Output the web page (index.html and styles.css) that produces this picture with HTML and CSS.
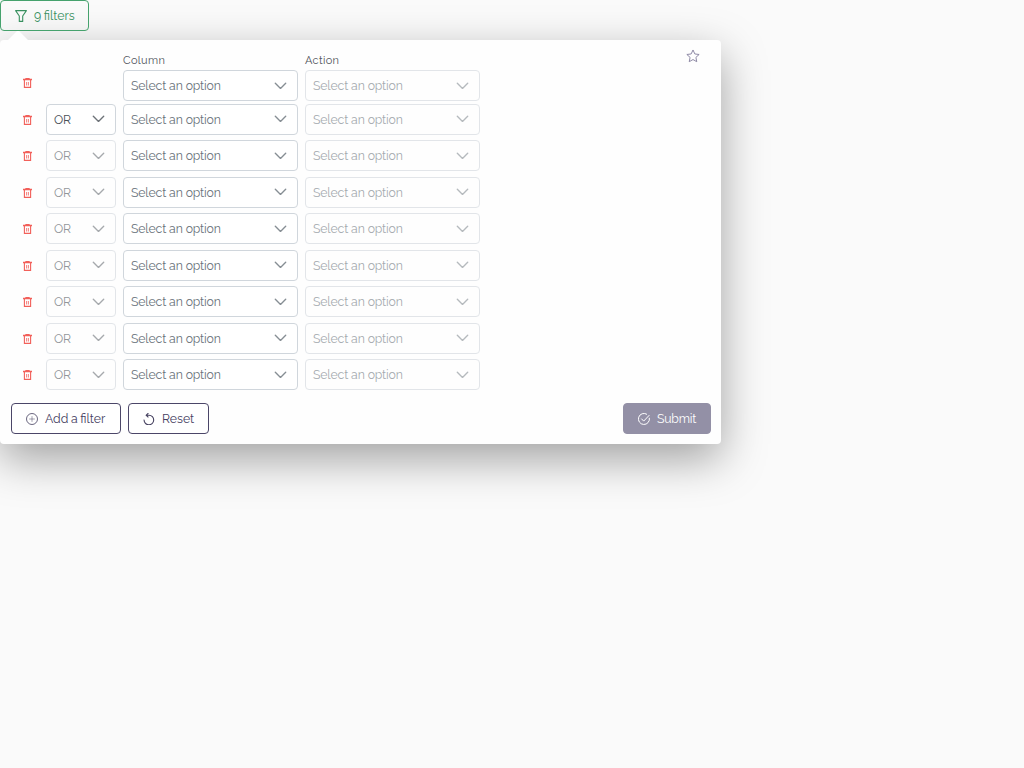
FILE: index.html
```html
<!DOCTYPE html>
<html lang="en">
<head>
<meta charset="utf-8">
<title>Filters</title>
<link rel="stylesheet" href="styles.css">
</head>
<body>
<svg class="symbols" aria-hidden="true">
  <symbol id="trash" viewBox="0 0 9 10"><path d="M0 1.5h9M3 1.1V.5h3v.6" fill="none" stroke="currentColor" stroke-width="1.3"/><path d="M1.4 2v7.4h6.2V2" fill="none" stroke="currentColor" stroke-width="1.1"/><path d="M3.6 4v3.5M5.4 4v3.5" fill="none" stroke="currentColor" stroke-width=".8"/></symbol>
  <symbol id="chevron" viewBox="0 0 12 8"><path d="M.8 1.2 6 6.4l5.2-5.2" fill="none" stroke="currentColor" stroke-width="1.35" stroke-linecap="round" stroke-linejoin="round"/></symbol>
</svg>
<button class="button toggle">
  <svg class="icon" viewBox="0 0 12 12"><path d="M.6.6h10.8L7.7 6v5.4H4.3V6z" fill="none" stroke="currentColor" stroke-width="1.1" stroke-linejoin="round"/></svg>
  <span class="toggle-text">9 filters</span>
</button>
<section class="panel">
  <button class="favourite" aria-label="Favourite"><svg viewBox="0 0 13 13"><path d="m6.5.9 1.7 3.7 4 .5-3 2.7.8 4-3.5-2-3.5 2 .8-4-3-2.7 4-.5z" fill="none" stroke="currentColor" stroke-width=".9" stroke-linejoin="round"/></svg></button>
  <div class="rows" id="rows"></div>
  <footer class="footer">
    <button class="button add">
      <svg class="icon" viewBox="0 0 12 12" fill="none" stroke="currentColor"><circle cx="6" cy="6" r="5.5" stroke-width=".8"/><path d="M6 3.2v5.6M3.2 6h5.6" stroke-width=".5"/></svg>
      <span class="add-text">Add a filter</span>
    </button>
    <button class="button reset">
      <svg class="icon" viewBox="0 0 12 12" fill="none" stroke="currentColor" stroke-width="1.1"><path d="M1.1 6.6a4.8 4.8 0 1 0 4.9-4.4H3.2M5.4.1 3.2 2.2l2.2 2.2"/></svg>
      <span class="reset-text">Reset</span>
    </button>
    <button class="button submit">
      <svg class="icon" viewBox="0 0 12 12" fill="none" stroke="currentColor"><path d="M11.3 4.8A5.5 5.5 0 1 1 9 1.4M3.3 5.6l2.4 2.5 5.7-6" stroke-width="1"/></svg>
      <span class="submit-text">Submit</span>
    </button>
  </footer>
</section>
<script src="script.js"></script>
</body>
</html>
```
FILE: styles.css
```css
* { box-sizing: border-box; }
body { margin: 0; min-height: 100vh; background: #fafafa; font: 400 12.25px/16px Raleway, Lato, sans-serif; color: #6c757d; }
button { font: inherit; }
.symbols { display: none; }
.button { display: flex; align-items: center; height: 31px; padding: 0 14px; border: 1px solid #4b4668; border-radius: 4px; background: #fff; color: #45405f; white-space: nowrap; word-spacing: -.5px; }
.icon { width: 12px; height: 12px; margin-right: 7px; flex: none; }
.toggle { width: 89px; border-color: #46a26d; color: #38905f; background: transparent; position: relative; z-index: 2; }
.panel { position: relative; width: 721px; height: 404px; margin-top: 9px; padding: 13px 10px 10px 11px; background: #fefefe; border-radius: 4px; box-shadow: 0 15px 45px rgba(0,0,0,.36); display: flex; flex-direction: column; }
.panel::before { content: ""; position: absolute; left: 8px; top: -10px; border: 10px solid transparent; border-top: 0; border-bottom-color: #fefefe; }
.favourite { position: absolute; top: 9px; right: 21px; width: 14px; height: 14px; padding: 0; border: 0; background: none; color: #8b86a3; }
.favourite svg { display: block; width: 14px; height: 14px; }
.rows { display: flex; flex-direction: column; }
.row { display: grid; grid-template-columns: 28px 70px 175px 175px; column-gap: 7px; align-items: center; height: 36.5px; }
.row.first { height: 48.2px; align-items: end; }
.remove { display: flex; justify-content: center; width: 28px; height: 31px; padding: 1px 0 0 4px; align-items: center; border: 0; background: none; color: #f2605a; }
.first .remove { position: relative; top: -3px; }
.remove svg { width: 9px; height: 10px; }
.label { display: block; height: 17px; line-height: 15px; font-size: 11px; letter-spacing: .33px; color: #50545c; }
.select { display: flex; align-items: center; justify-content: space-between; height: 31px; padding: 0 10px 0 7px; border: 1px solid #d0d6dc; border-radius: 4px; background: #fff; color: #69727a; }
.select svg { width: 13px; height: 8px; flex: none; opacity: .8; }
.option { padding-top: .3px; letter-spacing: -.14px; }
.select.joiner { color: #495057; }
.select.disabled { opacity: .6; }
.footer { display: flex; gap: 7px; margin-top: auto; }
.add { width: 110px; }
.reset { width: 81px; }
.submit { width: 88px; margin-left: auto; border-color: #9390a6; background: #9390a6; color: #fff; }
.submit-text { letter-spacing: -.2px; }
```
FILE: script.js
```js
const rows = document.getElementById('rows');
const select = (text, classes = '') =>
  `<div class="select ${classes}"><span class="option">${text}</span><svg><use href="#chevron"/></svg></div>`;
for (let i = 0; i < 9; i++) {
  const first = i === 0;
  const row = document.createElement('div');
  row.className = first ? 'row first' : 'row';
  row.innerHTML = `<button class="remove" aria-label="Remove"><svg><use href="#trash"/></svg></button>
    ${first ? '<span></span>' : select('OR', i === 1 ? 'joiner' : 'joiner disabled')}
    <div>${first ? '<span class="label">Column</span>' : ''}${select('Select an option')}</div>
    <div>${first ? '<span class="label">Action</span>' : ''}${select('Select an option', 'disabled')}</div>`;
  rows.append(row);
}
```
